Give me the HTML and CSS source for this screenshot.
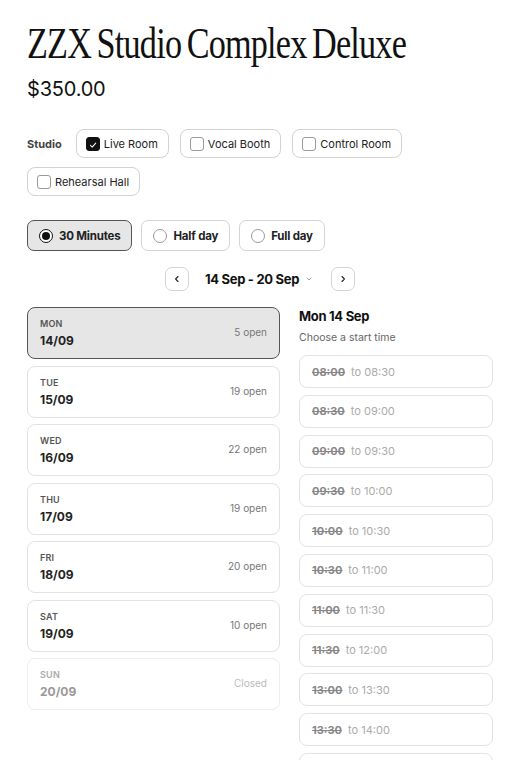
FILE: index.html
```html
<!DOCTYPE html>
<html>
<head>
<meta charset="utf-8">
<link rel="stylesheet" href="styles.css">
</head>
<body>
<div class="page">
  <h1 class="title"><span class="title-text">ZZX Studio Complex Deluxe</span></h1>
  <div class="price">$350.00</div>

  <div class="studio">
    <span class="studio-label">Studio</span>
    <label class="chip"><span class="cb on"><svg viewBox="0 0 14 14" width="14" height="14"><path d="M4 7.3 L6.1 9.4 L10.2 4.8" fill="none" stroke="#fff" stroke-width="1.2" stroke-linecap="round" stroke-linejoin="round"/></svg></span>Live Room</label>
    <label class="chip"><span class="cb"></span>Vocal Booth</label>
    <label class="chip"><span class="cb"></span>Control Room</label>
    <label class="chip"><span class="cb"></span>Rehearsal Hall</label>
  </div>

  <div class="durations">
    <div class="dur sel"><span class="radio on"></span>30 Minutes</div>
    <div class="dur"><span class="radio"></span>Half day</div>
    <div class="dur"><span class="radio"></span>Full day</div>
  </div>

  <div class="weeknav">
    <button class="navbtn"><svg viewBox="0 0 10 10" width="10" height="10"><path d="M6 2.5 L3.6 5 L6 7.5" fill="none" stroke="#222" stroke-width="1.1" stroke-linecap="round" stroke-linejoin="round"/></svg></button>
    <span class="range">14 Sep - 20 Sep</span>
    <svg class="caret" viewBox="0 0 8 8" width="8" height="8"><path d="M2 3 L4 5 L6 3" fill="none" stroke="#999" stroke-width="0.9" stroke-linecap="round" stroke-linejoin="round"/></svg>
    <button class="navbtn"><svg viewBox="0 0 10 10" width="10" height="10"><path d="M4 2.5 L6.4 5 L4 7.5" fill="none" stroke="#222" stroke-width="1.1" stroke-linecap="round" stroke-linejoin="round"/></svg></button>
  </div>

  <div class="cols">
    <div class="days">
      <div class="day sel"><div><div class="dow">MON</div><div class="date">14/09</div></div><div class="open">5 open</div></div>
      <div class="day"><div><div class="dow">TUE</div><div class="date">15/09</div></div><div class="open">19 open</div></div>
      <div class="day"><div><div class="dow">WED</div><div class="date">16/09</div></div><div class="open">22 open</div></div>
      <div class="day"><div><div class="dow">THU</div><div class="date">17/09</div></div><div class="open">19 open</div></div>
      <div class="day"><div><div class="dow">FRI</div><div class="date">18/09</div></div><div class="open">20 open</div></div>
      <div class="day"><div><div class="dow">SAT</div><div class="date">19/09</div></div><div class="open">10 open</div></div>
      <div class="day closed"><div><div class="dow">SUN</div><div class="date">20/09</div></div><div class="open">Closed</div></div>
    </div>
    <div class="times">
      <div class="times-head">Mon 14 Sep</div>
      <div class="times-sub">Choose a start time</div>
      <div class="slots">
        <div class="slot"><s>08:00</s><span>to 08:30</span></div>
        <div class="slot"><s>08:30</s><span>to 09:00</span></div>
        <div class="slot"><s>09:00</s><span>to 09:30</span></div>
        <div class="slot"><s>09:30</s><span>to 10:00</span></div>
        <div class="slot"><s>10:00</s><span>to 10:30</span></div>
        <div class="slot"><s>10:30</s><span>to 11:00</span></div>
        <div class="slot"><s>11:00</s><span>to 11:30</span></div>
        <div class="slot"><s>11:30</s><span>to 12:00</span></div>
        <div class="slot"><s>13:00</s><span>to 13:30</span></div>
        <div class="slot"><s>13:30</s><span>to 14:00</span></div>
        <div class="slot"><s>14:00</s><span>to 14:30</span></div>
      </div>
    </div>
  </div>
</div>
</body>
</html>
```

FILE: styles.css
```css
* { box-sizing: border-box; }
html, body { margin: 0; padding: 0; background: #fff; }
body {
  font-family: "Inter", "Noto Sans", sans-serif;
  color: #111;
  overflow: hidden;
  height: 760px;
}
.page { padding: 20px 27px 0 27px; }
.title {
  margin: 0;
  font-family: "Liberation Serif", serif;
  font-weight: 400;
  font-size: 44px;
  line-height: 48px;
  color: #111;
  white-space: nowrap;
}
.title-text {
  display: inline-block;
  letter-spacing: -1px;
  word-spacing: -3px;
  transform: scaleX(0.777);
  transform-origin: left center;
}
.price {
  margin-top: 9px;
  font-size: 20px;
  line-height: 24px;
  font-weight: 400;
  letter-spacing: -0.2px;
}
.studio {
  margin-top: 28px;
  display: flex;
  flex-wrap: wrap;
  align-items: center;
  gap: 9px 11px;
  width: 400px;
}
.studio-label {
  font-size: 11px;
  font-weight: 700;
  color: #444;
  margin-right: 3px;
}
.chip {
  height: 29px;
  display: inline-flex;
  align-items: center;
  gap: 4px;
  padding: 0 10px 0 9px;
  border: 1px solid #d2d2d2;
  border-radius: 8px;
  font-size: 11px;
  color: #222;
}
.cb {
  width: 14px; height: 14px;
  border: 1px solid #9a9a9a;
  border-radius: 3px;
  display: inline-flex;
  background: #fff;
}
.cb.on { background: #111; border-color: #111; }
.durations {
  margin-top: 24px;
  display: flex;
  gap: 9px;
}
.dur {
  height: 31px;
  display: inline-flex;
  align-items: center;
  gap: 6px;
  padding: 0 11px;
  border: 1px solid #d4d4d4;
  border-radius: 7px;
  font-size: 11.5px;
  font-weight: 700;
  color: #222;
  letter-spacing: -0.2px;
}
.dur.sel { background: #e6e6e6; border-color: #555; }
.radio {
  width: 14px; height: 14px;
  border: 1px solid #9a9a9a;
  border-radius: 50%;
  background: #fff;
  display: inline-flex;
  align-items: center;
  justify-content: center;
}
.radio.on { border-color: #111; }
.radio.on::after {
  content: "";
  width: 8px; height: 8px;
  border-radius: 50%;
  background: #111;
}
.weeknav {
  margin-top: 16px;
  display: flex;
  justify-content: center;
  align-items: center;
}
.navbtn {
  width: 24px; height: 24px;
  padding: 0;
  border: 1px solid #d4d4d4;
  border-radius: 7px;
  background: #fff;
  display: inline-flex;
  align-items: center;
  justify-content: center;
}
.range {
  margin-left: 16px;
  font-size: 13px;
  font-weight: 700;
  letter-spacing: -0.3px;
}
.caret { margin-left: 6px; margin-right: 18px; }
.cols {
  margin-top: 16px;
  display: grid;
  grid-template-columns: 253px 194px;
  column-gap: 19px;
  align-items: start;
}
.days { display: flex; flex-direction: column; gap: 6.5px; }
.day {
  height: 52px;
  border: 1px solid #e2e2e2;
  border-radius: 8px;
  padding: 0 12px;
  display: flex;
  align-items: center;
  justify-content: space-between;
}
.day.sel { background: #e6e6e6; border-color: #555; }
.dow {
  font-size: 9px;
  font-weight: 600;
  color: #555;
  letter-spacing: 0.2px;
  line-height: 12px;
}
.date {
  margin-top: 4px;
  font-size: 12px;
  font-weight: 700;
  color: #222;
  line-height: 14px;
}
.open { font-size: 10px; color: #777; margin-top: -2px; }
.day.closed { border-color: #eeeeee; }
.day.closed .dow { color: #aaa; }
.day.closed .date { color: #999; }
.day.closed .open { color: #bbb; }
.times-head {
  margin-top: 1px;
  font-size: 13px;
  font-weight: 700;
  letter-spacing: -0.3px;
  line-height: 16px;
}
.times-sub {
  margin-top: 7px;
  font-size: 10.5px;
  color: #666;
  line-height: 13px;
}
.slots {
  margin-top: 11px;
  display: flex;
  flex-direction: column;
  gap: 6.8px;
}
.slot {
  height: 33px;
  border: 1px solid #e3e3e3;
  border-radius: 8px;
  padding: 0 12px;
  display: flex;
  align-items: center;
  gap: 6px;
  font-size: 11px;
}
.slot s { font-weight: 700; color: #888; }
.slot span { color: #aaa; }
```
